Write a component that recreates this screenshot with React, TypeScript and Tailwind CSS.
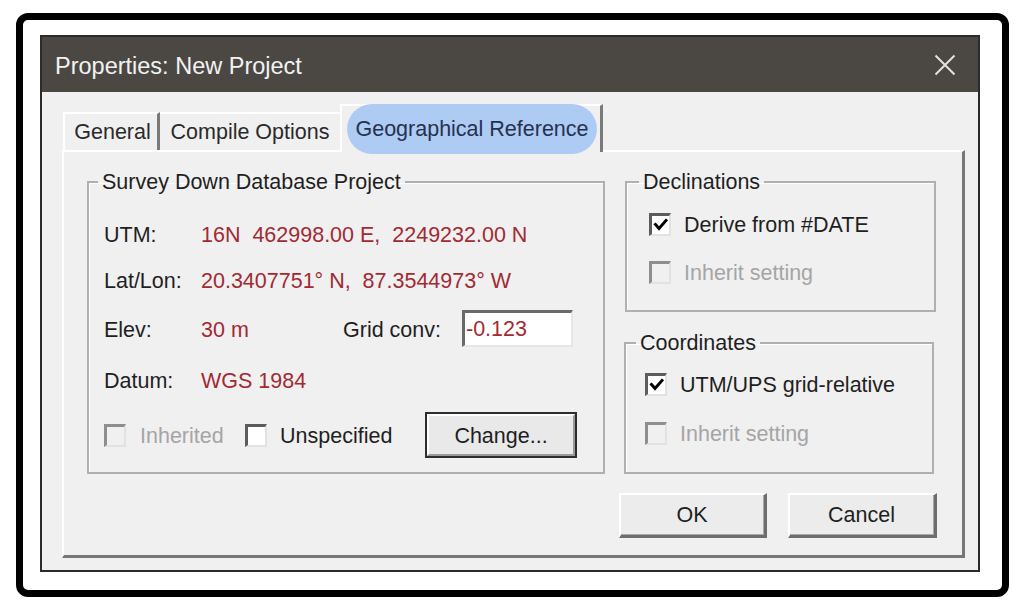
import React from "react";

function Check({ checked, disabled }: { checked?: boolean; disabled?: boolean }) {
  return (
    <span
      className={
        disabled
          ? "flex h-[23px] w-[22px] shrink-0 items-center justify-center border-t-[3px] border-l-[3px] border-b-2 border-r-2 border-t-[#8e8e8e] border-l-[#8e8e8e] border-b-[#e2e2e2] border-r-[#e2e2e2] bg-[#f0f0f0]"
          : "flex h-[23px] w-[22px] shrink-0 items-center justify-center border-t-[3px] border-l-[3px] border-b-2 border-r-2 border-t-[#5c5c5c] border-l-[#5c5c5c] border-b-[#e2e2e2] border-r-[#e2e2e2] bg-white"
      }
    >
      {checked && (
        <svg width="16" height="16" viewBox="0 0 16 16">
          <path d="M2.5 7.5 L6 11.5 L13 3.5" fill="none" stroke="#000" strokeWidth="3" strokeLinecap="square" strokeLinejoin="miter" />
        </svg>
      )}
    </span>
  );
}

function PushButton({ children, def, w }: { children: React.ReactNode; def?: boolean; w: string }) {
  return (
    <div
      className={
        def
          ? `${w} h-[46px] border-2 border-[#2e2e2e] bg-[#e9e9e9]`
          : `${w} h-[45px] bg-[#ececec] border-t-2 border-l-2 border-white border-b-[3px] border-r-[3px] border-b-[#6d6d6d] border-r-[#6d6d6d]`
      }
    >
      <div
        className={
          def
            ? "flex h-full w-full items-center justify-center border-t-2 border-l-2 border-white border-b-2 border-r-2 border-b-[#9a9a9a] border-r-[#9a9a9a] pt-[3px] text-[#1e1e1e]"
            : "flex h-full w-full items-center justify-center border-b border-r border-[#a8a8a8] pt-[3px] text-[#1e1e1e]"
        }
      >
        {children}
      </div>
    </div>
  );
}

export default function App() {
  const label = "text-[#1f1f1f]";
  const value = "text-[#a22a33]";
  const gray = "text-[#a5a5a5]";
  return (
    <div className="h-[614px] w-[1024px] bg-white pl-[16px] pt-[13px] font-['Liberation_Sans',Arial,sans-serif] text-[21.5px] leading-none">
      <div className="h-[584px] w-[993px] rounded-[12px] border-[7px] border-black pl-[17px] pt-[15px]">
        {/* dialog */}
        <div className="flex h-[537px] w-[940px] flex-col border-2 border-[#2b2b2b] bg-[#f0f0f0]">
          {/* title bar */}
          <div className="flex h-[55px] shrink-0 items-center justify-between bg-[#4b4844] pl-[13px] pr-[22px]">
            <span className="pt-[4px] text-[23.5px] text-[#f2f2f2]">Properties: New Project</span>
            <svg width="22" height="22" viewBox="0 0 22 22">
              <path d="M1.5 1.5 L20.5 20.5 M20.5 1.5 L1.5 20.5" stroke="#e2e2e2" strokeWidth="2" fill="none" />
            </svg>
          </div>
          {/* body */}
          <div className="flex flex-col pl-[20px] pt-[12px]">
            {/* tabs */}
            <div className="relative z-10 flex h-[46px] items-end">
              <div className="ml-[1px] flex h-[38px] w-[97px] items-center justify-center border-t-2 border-l-2 border-white border-r-[3px] border-r-[#7a7a7a] pl-[3px] pt-[2px] text-[#2a2a2a]">
                General
              </div>
              <div className="flex h-[38px] w-[182px] items-center justify-center border-t-2 border-white pr-[2px] pt-[2px] text-[#2a2a2a]">
                Compile Options
              </div>
              <div className="-ml-[2px] -mb-[2px] flex h-[48px] w-[263px] items-center border-t-2 border-l-2 border-white border-r-[3px] border-r-[#7a7a7a] bg-[#f0f0f0] pl-[5px]">
                <span className="flex h-[50px] w-[250px] items-center justify-center rounded-full bg-[#aecbf3] pt-[1px] text-[#25324f]">
                  Geographical Reference
                </span>
              </div>
            </div>
            {/* panel */}
            <div className="flex h-[408px] w-[903px] flex-col border-t-2 border-l-2 border-white border-b-[3px] border-r-[3px] border-b-[#777777] border-r-[#777777] pl-[23px] pt-[17px] pr-[25px]">
              <div className="flex">
                {/* left group */}
                <fieldset className="h-[305px] w-[518px] border-2 border-[#b0b0b0] shadow-[inset_1px_1px_0_#ffffff]">
                  <legend className={`ml-[9px] px-[4px] leading-[26px] ${label}`}>Survey Down Database Project</legend>
                  <div className="flex flex-col pl-[15px] pt-[16px]">
                    <div className="flex h-[46px] items-center pt-[4px]">
                      <span className={`w-[97px] ${label}`}>UTM:</span>
                      <span className={value}>16N&nbsp; 462998.00 E,&nbsp; 2249232.00 N</span>
                    </div>
                    <div className="flex h-[46px] items-center pt-[4px]">
                      <span className={`w-[97px] ${label}`}>Lat/Lon:</span>
                      <span className={value}>20.3407751° N,&nbsp; 87.3544973° W</span>
                    </div>
                    <div className="flex h-[50px] items-center">
                      <span className={`w-[97px] pt-[5px] ${label}`}>Elev:</span>
                      <span className={`w-[142px] pt-[5px] ${value}`}>30 m</span>
                      <span className={`w-[119px] pt-[5px] ${label}`}>Grid conv:</span>
                      <div className="flex h-[37px] w-[111px] items-center border-t-[3px] border-l-[3px] border-t-[#6a6a6a] border-l-[#6a6a6a] border-b-2 border-r-2 border-b-[#e6e6e6] border-r-[#e6e6e6] bg-white pl-[1px] pt-[3px]">
                        <span className={value}>-0.123</span>
                      </div>
                    </div>
                    <div className="flex h-[54px] items-center pt-[4px]">
                      <span className={`w-[97px] ${label}`}>Datum:</span>
                      <span className={value}>WGS 1984</span>
                    </div>
                    <div className="flex h-[56px] items-center">
                      <Check disabled />
                      <span className={`ml-[14px] w-[105px] pt-[3px] ${gray}`}>Inherited</span>
                      <Check />
                      <span className={`ml-[13px] w-[145px] pt-[3px] ${label}`}>Unspecified</span>
                      <PushButton def w="w-[152px]">Change...</PushButton>
                    </div>
                  </div>
                </fieldset>
                {/* right column */}
                <div className="ml-[20px] flex w-[312px] flex-col">
                  <fieldset className="h-[143px] w-[311px] border-2 border-[#b0b0b0] shadow-[inset_1px_1px_0_#ffffff]">
                    <legend className={`ml-[12px] px-[4px] leading-[26px] ${label}`}>Declinations</legend>
                    <div className="flex flex-col pl-[22px] pt-[5px]">
                      <div className="flex h-[48px] items-center">
                        <Check checked />
                        <span className={`ml-[13px] pt-[4px] ${label}`}>Derive from #DATE</span>
                      </div>
                      <div className="flex h-[48px] items-center">
                        <Check disabled />
                        <span className={`ml-[13px] pt-[4px] ${gray}`}>Inherit setting</span>
                      </div>
                    </div>
                  </fieldset>
                  <fieldset className="mt-[18px] h-[144px] w-[310px] -ml-[1px] border-2 border-[#b0b0b0] shadow-[inset_1px_1px_0_#ffffff]">
                    <legend className={`ml-[10px] px-[4px] leading-[26px] ${label}`}>Coordinates</legend>
                    <div className="flex flex-col pl-[19px] pt-[4px]">
                      <div className="flex h-[48px] items-center">
                        <Check checked />
                        <span className={`ml-[13px] pt-[4px] ${label}`}>UTM/UPS grid-relative</span>
                      </div>
                      <div className="flex h-[50px] items-center">
                        <Check disabled />
                        <span className={`ml-[13px] pt-[4px] ${gray}`}>Inherit setting</span>
                      </div>
                    </div>
                  </fieldset>
                </div>
              </div>
              {/* buttons */}
              <div className="mt-[19px] flex justify-end gap-[21px]">
                <PushButton w="w-[148px]">OK</PushButton>
                <PushButton w="w-[149px]">Cancel</PushButton>
              </div>
            </div>
          </div>
        </div>
      </div>
    </div>
  );
}
